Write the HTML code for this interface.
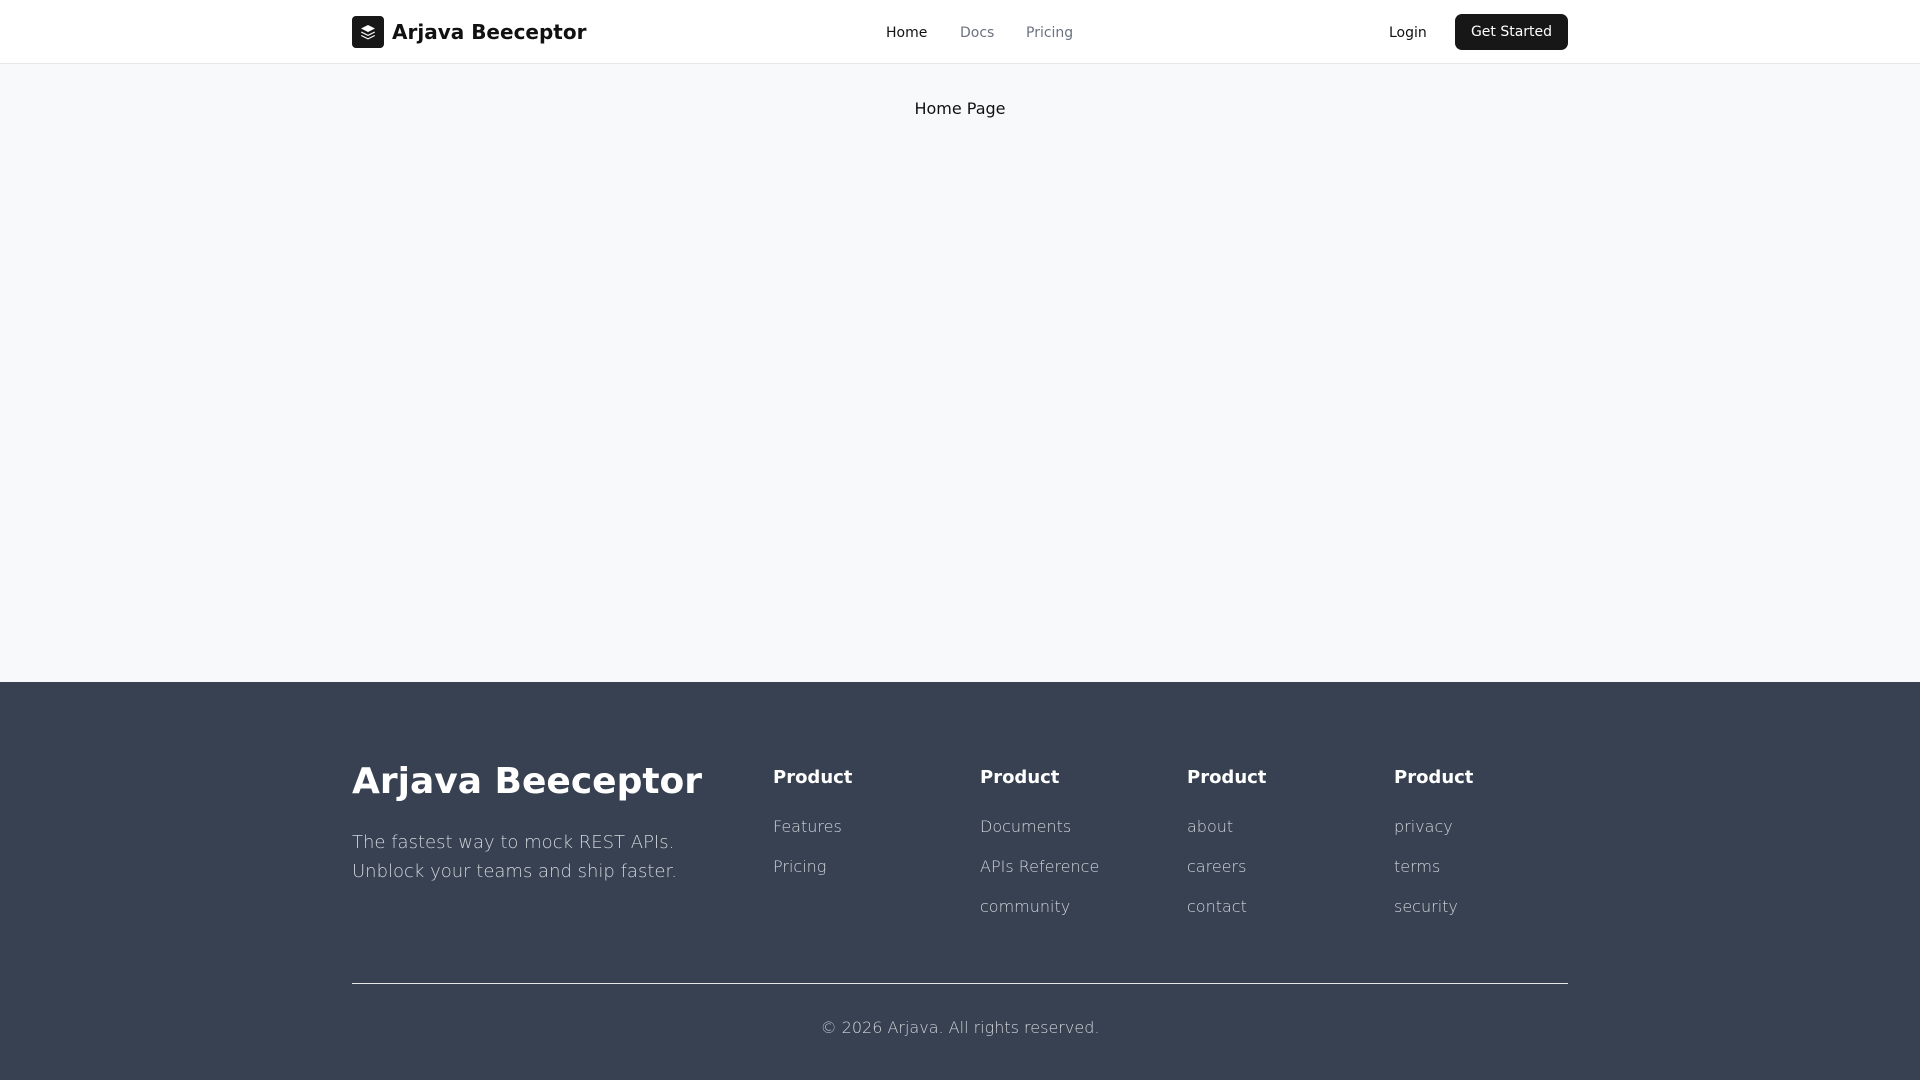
<!DOCTYPE html>
<html><head><meta charset="utf-8"><style>
*{margin:0;padding:0;box-sizing:border-box}
body{width:1920px;height:1080px;font-family:"DejaVu Sans","Liberation Sans",sans-serif;background:#f8f9fb;position:relative;overflow:hidden}
.nav{position:absolute;top:0;left:0;width:1920px;height:64px;background:#fff;border-bottom:1px solid #e5e7eb}
.abs{position:absolute;white-space:nowrap}
.logo{left:352px;top:16px;width:32px;height:32px;background:#171717;border-radius:4px}
.brand{left:392px;top:18px;font-size:20px;font-weight:bold;color:#111;line-height:28px}
.nl{top:23px;font-size:14px;line-height:20px;color:#6b7280}
.btn{left:1455px;top:14px;width:113px;height:36px;background:#171717;border-radius:7px;color:#fff;font-size:14px;line-height:37px;text-align:center}
.footer{position:absolute;top:682px;left:0;width:1920px;height:398px;background:#374151;color:#fff}
.fh{font-size:18px;font-weight:bold;line-height:28px;top:82px}
.fl{font-size:16px;line-height:24px;color:#d1d5db;font-weight:300}
</style></head><body>
<div class="nav">
<div class="abs logo"><svg width="32" height="32" viewBox="0 0 32 32"><path d="M16 9 L23 12.5 L16 16 L9 12.5Z" fill="#fff"/><path d="M9.5 15.5 L16 18.7 L22.5 15.5 L23 16.5 L16 20 L9 16.5Z" fill="#fff"/><path d="M9.5 19 L16 22.2 L22.5 19 L23 20 L16 23.5 L9 20Z" fill="#fff"/></svg></div>
<div class="abs brand">Arjava Beeceptor</div>
<div class="abs nl" style="left:886px;color:#111">Home</div>
<div class="abs nl" style="left:960px">Docs</div>
<div class="abs nl" style="left:1026px">Pricing</div>
<div class="abs nl" style="left:1389px;color:#111">Login</div>
<div class="abs btn">Get Started</div>
</div>
<div class="abs" style="left:0;width:1920px;text-align:center;top:97px;font-size:16px;line-height:24px;color:#111">Home Page</div>
<div class="footer">
<div class="abs" style="left:352px;top:78px;font-size:36px;font-weight:bold;line-height:44px">Arjava Beeceptor</div>
<div class="abs" style="left:352px;top:146px;font-size:18px;line-height:29px;color:#d1d5db;font-weight:300">The fastest way to mock REST APIs.<br>Unblock your teams and ship faster.</div>
<div class="abs fh" style="left:773px">Product</div>
<div class="abs fl" style="left:773px;top:133px">Features</div>
<div class="abs fl" style="left:773px;top:173px">Pricing</div>
<div class="abs fh" style="left:980px">Product</div>
<div class="abs fl" style="left:980px;top:133px">Documents</div>
<div class="abs fl" style="left:980px;top:173px">APIs Reference</div>
<div class="abs fl" style="left:980px;top:213px">community</div>
<div class="abs fh" style="left:1187px">Product</div>
<div class="abs fl" style="left:1187px;top:133px">about</div>
<div class="abs fl" style="left:1187px;top:173px">careers</div>
<div class="abs fl" style="left:1187px;top:213px">contact</div>
<div class="abs fh" style="left:1394px">Product</div>
<div class="abs fl" style="left:1394px;top:133px">privacy</div>
<div class="abs fl" style="left:1394px;top:173px">terms</div>
<div class="abs fl" style="left:1394px;top:213px">security</div>
<div class="abs" style="left:352px;top:301px;width:1216px;height:1px;background:#e5e7eb"></div>
<div class="abs fl" style="left:0;width:1920px;text-align:center;top:334px">© 2026 Arjava. All rights reserved.</div>
</div>
</body></html>
